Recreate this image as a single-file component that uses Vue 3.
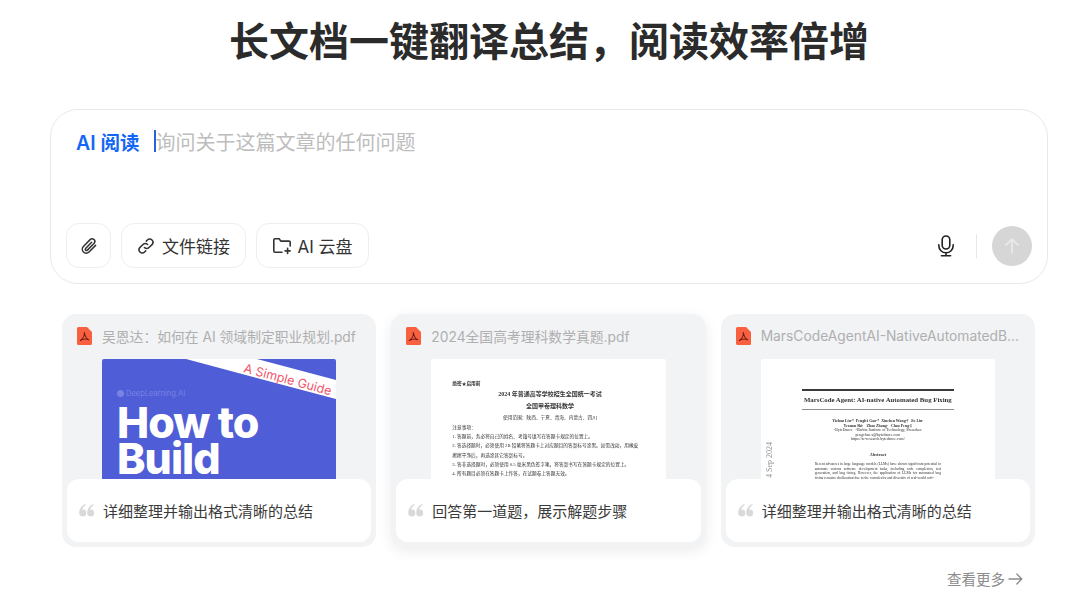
<script setup>
const docRules = [
  '1. 答题前，务必将自己的姓名、考籍号填写在答题卡规定的位置上。',
  '2. 答选择题时，必须使用 2B 铅笔将答题卡上对应题目的答案标号涂黑。如需改动，用橡皮',
  '擦擦干净后，再选涂其它答案标号。',
  '3. 答非选择题时，必须使用 0.5 毫米黑色签字笔，将答案书写在答题卡规定的位置上。',
  '4. 所有题目必须在答题卡上作答，在试题卷上答题无效。'
]
</script>

<template>
  <div class="page">
    <h1 class="title">长文档一键翻译总结，阅读效率倍增</h1>

    <!-- 输入框 -->
    <div class="ask-box">
      <div class="ask-top">
        <span class="ask-tag">AI 阅读</span>
        <span class="caret"></span>
        <span class="ask-placeholder">询问关于这篇文章的任何问题</span>
      </div>
      <div class="ask-bottom">
        <div class="tools">
          <button class="tool-btn icon-only">
            <svg width="20" height="20" viewBox="0 0 20 20" fill="none" stroke="#333" stroke-width="1.5" stroke-linecap="round" stroke-linejoin="round">
              <path d="M16.6 9.4 10 16a3.9 3.9 0 0 1-5.6-5.5l7-7.1a2.7 2.7 0 0 1 3.8 3.8l-6.8 6.9a1.2 1.2 0 0 1-1.8-1.7l6-6.1" />
            </svg>
          </button>
          <button class="tool-btn">
            <svg width="18" height="18" viewBox="0 0 18 18" fill="none" stroke="#333" stroke-width="1.5" stroke-linecap="round" stroke-linejoin="round">
              <path d="M7.4 10.6a3.2 3.2 0 0 0 4.6 0l3-3a3.2 3.2 0 0 0-4.6-4.6L9.3 4.1" />
              <path d="M10.6 7.4a3.2 3.2 0 0 0-4.6 0l-3 3A3.2 3.2 0 0 0 7.6 15l1.1-1.1" />
            </svg>
            <span>文件链接</span>
          </button>
          <button class="tool-btn cloud">
            <svg width="20" height="18" viewBox="0 0 20 18" fill="none" stroke="#333" stroke-width="1.6" stroke-linecap="round" stroke-linejoin="round">
              <path d="M10 15.2H3a1.2 1.2 0 0 1-1.2-1.2V3A1.2 1.2 0 0 1 3 1.8h4.2l1.6 2.3H17A1.2 1.2 0 0 1 18.2 5.3V9" />
              <path d="M15.6 11.4v5M13.1 13.9h5" />
            </svg>
            <span>AI 云盘</span>
          </button>
        </div>
        <div class="actions">
          <svg class="mic" width="20" height="24" viewBox="0 0 20 24" fill="none" stroke="#222" stroke-width="1.6" stroke-linecap="round">
            <rect x="6.2" y="2" width="7.6" height="13" rx="3.8" />
            <path d="M2.8 10.8v.8a7.2 7.2 0 0 0 14.4 0v-.8M10 19v2.6M5.4 21.8h9.2" />
          </svg>
          <span class="divider"></span>
          <button class="send-btn">
            <svg width="18" height="18" viewBox="0 0 18 18" fill="none" stroke="#e9e9e9" stroke-width="1.8" stroke-linecap="round" stroke-linejoin="round">
              <path d="M9 16V2.4M3 8.2l6-6 6 6" />
            </svg>
          </button>
        </div>
      </div>
    </div>

    <!-- 示例文档 -->
    <div class="cards">
      <div class="card">
        <div class="card-head">
          <svg class="pdf-icon" width="15" height="18" viewBox="0 0 15 18">
            <path d="M1.5 0H10l5 5v11.5a1.5 1.5 0 0 1-1.5 1.5h-12A1.5 1.5 0 0 1 0 16.5V1.5A1.5 1.5 0 0 1 1.5 0z" fill="#f8603f" />
            <path d="M7.3 5.5c.4 3-1.4 6.500-4 8 2.600-1.500 6-1.800 8.400-.7-2.100-1-3.800-4-4.400-7.300z" fill="none" stroke="#6b1d14" stroke-width="1.1" stroke-linejoin="round" />
          </svg>
          <span class="file-name">吴恩达：如何在 AI 领域制定职业规划.pdf</span>
        </div>
        <div class="preview cover">
          <svg class="ribbon" width="150" height="40" viewBox="0 0 150 40">
            <polygon points="0,0 71,0 150,21 150,40" fill="#fff" />
            <text x="57" y="13" transform="rotate(15 57 13)" font-size="12.5" fill="#f0566c" font-family="Inter, sans-serif">A Simple Guide</text>
          </svg>
          <div class="brand-line"><span class="brand-dot"></span>DeepLearning.AI</div>
          <div class="cover-title">How to<br />Build</div>
        </div>
        <div class="prompt">
          <svg class="quote" width="15" height="13" viewBox="0 0 15 13" fill="#d9d9d9">
            <path d="M6.2 0C3 1.5.3 4.2.3 8.5a3.500 3.500 0 1 0 3.500-3c-.3 0-.6 0-.8.100.5-1.800 1.800-3.400 3.700-4.700zM14.200 0C11 1.500 8.300 4.200 8.300 8.500a3.500 3.500 0 1 0 3.500-3c-.3 0-.6 0-.8.100.5-1.800 1.800-3.400 3.700-4.700z" />
          </svg>
          <span>详细整理并输出格式清晰的总结</span>
        </div>
      </div>

      <div class="card raised">
        <div class="card-head">
          <svg class="pdf-icon" width="15" height="18" viewBox="0 0 15 18">
            <path d="M1.5 0H10l5 5v11.5a1.5 1.5 0 0 1-1.5 1.5h-12A1.5 1.5 0 0 1 0 16.5V1.5A1.5 1.5 0 0 1 1.5 0z" fill="#f8603f" />
            <path d="M7.3 5.5c.4 3-1.4 6.500-4 8 2.600-1.500 6-1.800 8.400-.7-2.100-1-3.800-4-4.400-7.300z" fill="none" stroke="#6b1d14" stroke-width="1.1" stroke-linejoin="round" />
          </svg>
          <span class="file-name">2024全国高考理科数学真题.pdf</span>
        </div>
        <div class="preview exam">
          <p class="exam-secret">绝密★启用前</p>
          <p class="exam-title">2024 年普通高等学校招生全国统一考试</p>
          <p class="exam-sub">全国甲卷理科数学</p>
          <p class="exam-scope">使用范围：陕西、宁夏、青海、内蒙古、四川</p>
          <p class="exam-line">注意事项：</p>
          <p v-for="line in docRules" :key="line" class="exam-line">{{ line }}</p>
        </div>
        <div class="prompt">
          <svg class="quote" width="15" height="13" viewBox="0 0 15 13" fill="#d9d9d9">
            <path d="M6.2 0C3 1.5.3 4.2.3 8.5a3.500 3.500 0 1 0 3.500-3c-.3 0-.6 0-.8.100.5-1.800 1.800-3.400 3.700-4.700zM14.200 0C11 1.500 8.300 4.200 8.300 8.500a3.500 3.500 0 1 0 3.500-3c-.3 0-.6 0-.8.100.5-1.800 1.800-3.400 3.700-4.700z" />
          </svg>
          <span>回答第一道题，展示解题步骤</span>
        </div>
      </div>

      <div class="card">
        <div class="card-head">
          <svg class="pdf-icon" width="15" height="18" viewBox="0 0 15 18">
            <path d="M1.5 0H10l5 5v11.5a1.5 1.5 0 0 1-1.5 1.5h-12A1.5 1.5 0 0 1 0 16.5V1.5A1.5 1.5 0 0 1 1.5 0z" fill="#f8603f" />
            <path d="M7.3 5.5c.4 3-1.4 6.500-4 8 2.600-1.500 6-1.800 8.400-.7-2.100-1-3.800-4-4.400-7.300z" fill="none" stroke="#6b1d14" stroke-width="1.1" stroke-linejoin="round" />
          </svg>
          <span class="file-name">MarsCodeAgentAI-NativeAutomatedBugFixing.pdf</span>
        </div>
        <div class="preview paper">
          <span class="arxiv">4 Sep 2024</span>
          <div class="paper-body">
            <div class="paper-title">MarsCode Agent: AI-native Automated Bug Fixing</div>
            <div class="paper-authors">
              <b>Yizhou Liu¹*&nbsp; Pengfei Gao¹*&nbsp; Xinchen Wang²†&nbsp; Jie Liu¹</b><br />
              <b>Yexuan Shi¹&nbsp;&nbsp; Zhao Zhang¹&nbsp;&nbsp; Chao Peng¹‡</b><br />
              ¹ByteDance&nbsp;&nbsp; ²Harbin Institute of Technology, Shenzhen<br />
              pengchao.x@bytedance.com<br />
              https://se-research.bytedance.com/
            </div>
            <div class="paper-abs-title">Abstract</div>
            <p class="paper-abs">Recent advances in large language models (LLMs) have shown significant potential to automate various software development tasks, including code completion, test generation, and bug fixing. However, the application of LLMs for automated bug fixing remains challenging due to the complexity and diversity of real-world soft-</p>
          </div>
        </div>
        <div class="prompt">
          <svg class="quote" width="15" height="13" viewBox="0 0 15 13" fill="#d9d9d9">
            <path d="M6.2 0C3 1.5.3 4.2.3 8.5a3.500 3.500 0 1 0 3.500-3c-.3 0-.6 0-.8.100.5-1.800 1.800-3.400 3.700-4.700zM14.200 0C11 1.500 8.300 4.200 8.300 8.500a3.500 3.500 0 1 0 3.500-3c-.3 0-.6 0-.8.100.5-1.800 1.800-3.400 3.700-4.700z" />
          </svg>
          <span>详细整理并输出格式清晰的总结</span>
        </div>
      </div>
    </div>

    <div class="more">
      <span>查看更多</span>
      <svg width="15" height="12" viewBox="0 0 15 12" fill="none" stroke="#8c8c8c" stroke-width="1.3" stroke-linecap="round" stroke-linejoin="round">
        <path d="M1 6h12.500M8.800 1l5 5-5 5" />
      </svg>
    </div>
  </div>
</template>

<style scoped>
.page {
  width: 1080px;
  height: 600px;
  overflow: hidden;
  box-sizing: border-box;
  padding: 14px 32px 0 50px;
  background: #fff;
  font-family: Inter, "Noto Sans CJK SC", sans-serif;
  color: #333;
}

.title {
  margin: 0 0 39px;
  height: 56px;
  line-height: 56px;
  font-size: 40px;
  font-weight: 700;
  text-align: center;
  color: #2b2b2b;
}

/* 输入框 */
.ask-box {
  height: 175px;
  box-sizing: border-box;
  border: 1px solid #e8e8ea;
  border-radius: 28px;
  padding: 17px 15px 15px;
  display: flex;
  flex-direction: column;
  justify-content: space-between;
}

.ask-top {
  display: flex;
  align-items: center;
  height: 28px;
  padding-left: 10px;
}

.ask-tag {
  width: 78px;
  font-size: 19.5px;
  font-weight: 600;
  color: #1467f5;
  white-space: nowrap;
}

.caret {
  width: 1.5px;
  height: 22px;
  background: #2a62d9;
}

.ask-placeholder {
  font-size: 20px;
  color: #bdbdbd;
}

.ask-bottom {
  display: flex;
  justify-content: space-between;
  align-items: center;
}

.tools {
  display: flex;
  gap: 10px;
}

.tool-btn {
  height: 45px;
  width: 125px;
  box-sizing: border-box;
  border: 1px solid #eeeeef;
  border-radius: 13px;
  background: #fff;
  display: flex;
  align-items: center;
  justify-content: center;
  gap: 7px;
  padding: 0;
  font-family: inherit;
  font-size: 17px;
  color: #333;
}

.icon-only {
  width: 45px;
}

.cloud {
  width: 113px;
  gap: 5px;
}

.actions {
  display: flex;
  align-items: center;
}

.mic {
  margin-right: 20px;
}

.divider {
  width: 1px;
  height: 24px;
  background: #e8e8e8;
  margin-right: 15px;
}

.send-btn {
  width: 40px;
  height: 40px;
  border: none;
  border-radius: 50%;
  background: #d6d6d6;
  display: flex;
  align-items: center;
  justify-content: center;
  padding: 0;
}

/* 示例文档 */
.cards {
  margin: 30px 13px 0 12px;
  display: grid;
  grid-template-columns: repeat(3, minmax(0, 1fr));
  gap: 15px;
}

.card {
  height: 233px;
  background: #f2f3f5;
  border-radius: 14px;
  padding: 0 5px 5px;
  box-sizing: border-box;
  display: flex;
  flex-direction: column;
}

.raised {
  box-shadow: 0 4px 14px rgba(0, 0, 0, 0.08);
}

.card-head {
  height: 45px;
  box-sizing: border-box;
  display: flex;
  align-items: center;
  gap: 10px;
  padding: 0 10px 2px;
}

.pdf-icon {
  flex-shrink: 0;
}

.file-name {
  min-width: 0;
  font-size: 13.8px;
  color: #afafaf;
  white-space: nowrap;
  overflow: hidden;
  text-overflow: ellipsis;
}

.preview {
  position: relative;
  height: 120px;
  margin: 0 35px;
  overflow: hidden;
  background: #fff;
  border-radius: 2px 2px 0 0;
  box-sizing: border-box;
}

/* 封面 */
.cover {
  background: #4f5dd6;
  padding: 29px 0 0 15px;
  color: #fff;
}

.ribbon {
  position: absolute;
  top: 0;
  right: 0;
}

.brand-line {
  display: flex;
  align-items: center;
  gap: 2px;
  font-size: 7.5px;
  color: #7884e4;
  height: 10px;
}

.brand-dot {
  width: 7px;
  height: 7px;
  border-radius: 50%;
  background: #7884e4;
}

.cover-title {
  margin-top: 6px;
  font-size: 43px;
  line-height: 36px;
  font-weight: 800;
  letter-spacing: -1px;
}

/* 试卷 */
.exam {
  padding: 20px 18px 0 21px;
  font-family: "Liberation Serif", "Noto Sans CJK SC", serif;
  color: #333;
  filter: blur(0.25px);
}

.exam p {
  margin: 0;
  white-space: nowrap;
}

.exam-secret {
  font-size: 4.7px;
  line-height: 9px;
  font-weight: 700;
}

.exam-title {
  font-size: 6px;
  line-height: 12px;
  font-weight: 700;
  text-align: center;
}

.exam-sub {
  font-size: 6px;
  line-height: 12px;
  font-weight: 700;
  text-align: center;
}

.exam-scope {
  font-size: 4.7px;
  line-height: 11px;
  text-align: center;
}

.exam .exam-line {
  font-size: 4.7px;
  line-height: 9.2px;
}

/* 论文 */
.paper {
  font-family: "Liberation Serif", serif;
  color: #333;
  filter: blur(0.25px);
}

.arxiv {
  position: absolute;
  left: 4px;
  top: 119px;
  font-size: 8px;
  color: #8f8f8f;
  white-space: nowrap;
  transform: rotate(-90deg);
  transform-origin: left top;
}

.paper-body {
  margin: 30px 41px 0;
}

.paper-title {
  border-top: 2px solid #3a3a3a;
  border-bottom: 1px solid #8d8d8d;
  height: 18px;
  line-height: 17px;
  font-size: 6.8px;
  font-weight: 700;
  text-align: center;
  white-space: nowrap;
}

.paper-authors {
  margin-top: 9px;
  font-size: 3.9px;
  line-height: 4.6px;
  text-align: center;
  white-space: nowrap;
}

.paper-abs-title {
  margin-top: 10px;
  font-size: 4.5px;
  line-height: 6px;
  font-weight: 700;
  text-align: center;
}

.paper-abs {
  margin: 4px 13px 0;
  font-size: 3.65px;
  line-height: 4.7px;
  text-align: justify;
}

.prompt {
  position: relative;
  height: 63px;
  background: #fff;
  border-radius: 12px;
  display: flex;
  align-items: center;
  gap: 9px;
  padding-left: 12px;
  font-size: 15px;
  color: #3a3a3a;
}

.quote {
  flex-shrink: 0;
}

.more {
  margin: 21px 25px 0 0;
  display: flex;
  justify-content: flex-end;
  align-items: center;
  gap: 3px;
  font-size: 14.5px;
  color: #8c8c8c;
}
</style>

<style>
body {
  background: #fff;
}
</style>
